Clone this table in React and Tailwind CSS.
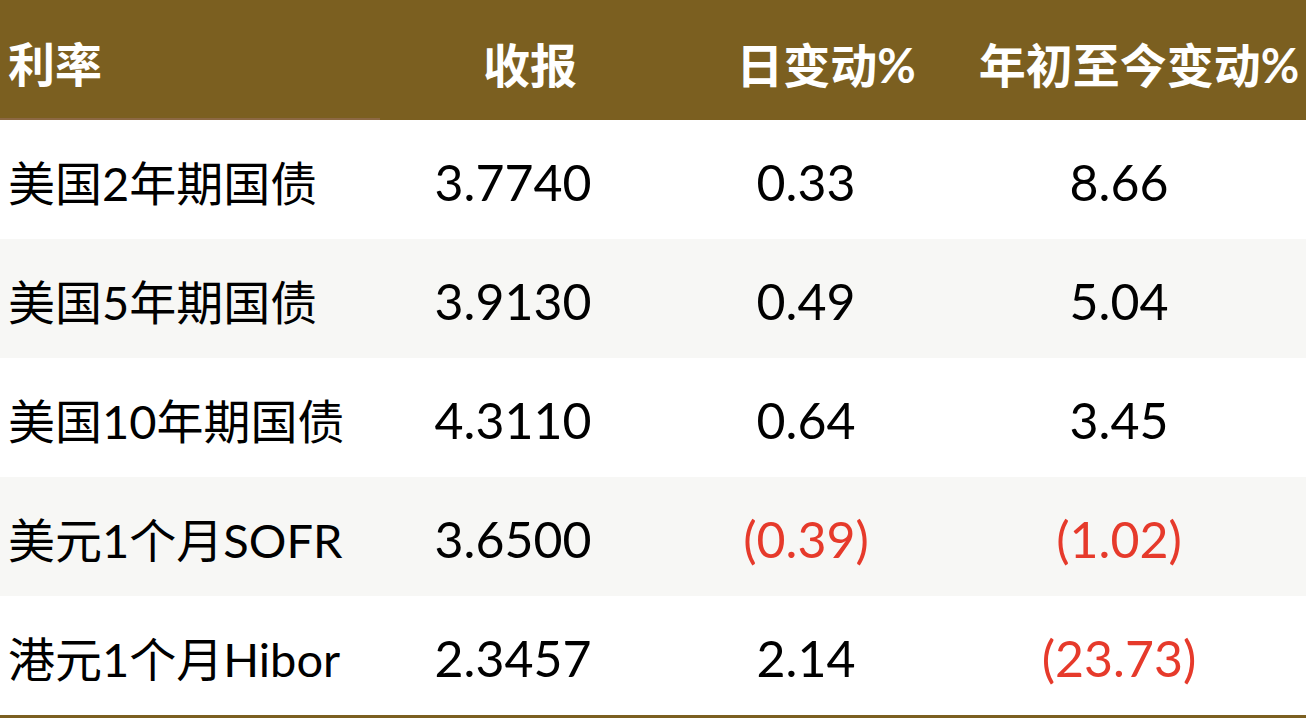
const rows = [
  { name: '美国2年期国债', close: '3.7740', day: '0.33', ytd: '8.66' },
  { name: '美国5年期国债', close: '3.9130', day: '0.49', ytd: '5.04' },
  { name: '美国10年期国债', close: '4.3110', day: '0.64', ytd: '3.45' },
  { name: '美元1个月SOFR', close: '3.6500', day: '(0.39)', ytd: '(1.02)' },
  { name: '港元1个月Hibor', close: '2.3457', day: '2.14', ytd: '(23.73)' },
];

const font = { fontFamily: "Lato, 'Noto Sans CJK SC', sans-serif" };

const numClass = (v) => (v.startsWith('(') ? 'text-[#e63a2b]' : 'text-black');

const App = () => {
  return (
    <div className="h-[722px] w-[1306px] overflow-hidden bg-white" style={font}>
      <div className="grid h-[120px] grid-cols-[380px_300px_252px_1fr] bg-[#7b5f20] text-[47px] font-bold leading-none text-white">
        <div className="flex items-center border-b-2 border-[#8c6843] pl-[8px] pt-[10px]">利率</div>
        <div className="flex items-center justify-center pt-[10px]">收报</div>
        <div className="flex items-center justify-center whitespace-nowrap pl-[40px] pt-[10px]">日变动%</div>
        <div className="flex items-center justify-center whitespace-nowrap pl-[40px] pt-[10px]">年初至今变动%</div>
      </div>

      {rows.map((row, i) => (
        <div
          key={row.name}
          className={`grid h-[119px] grid-cols-[380px_300px_252px_1fr] leading-none ${
            i % 2 === 1 ? 'bg-[#f7f7f5]' : 'bg-white'
          }`}
        >
          <div className="flex items-center whitespace-nowrap pl-[8px] pt-[8px] text-[47px] text-black">{row.name}</div>
          <div className="flex items-center justify-center pr-[34px] pt-[4px] text-[50px] text-black">{row.close}</div>
          <div className={`flex items-center justify-center pt-[4px] text-[50px] ${numClass(row.day)}`}>{row.day}</div>
          <div className={`flex items-center justify-center pt-[4px] text-[50px] ${numClass(row.ytd)}`}>{row.ytd}</div>
        </div>
      ))}

      <div className="h-[3px] bg-[#7b5f20]" />
    </div>
  );
};

export default App;
